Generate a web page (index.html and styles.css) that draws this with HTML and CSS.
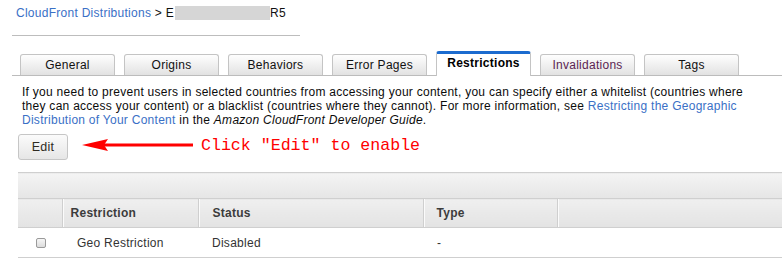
FILE: index.html
```html
<!DOCTYPE html>
<html>
<head>
<meta charset="utf-8">
<link rel="stylesheet" href="styles.css">
</head>
<body>
<div class="page">
  <div class="crumb"><a class="link">CloudFront Distributions</a> &gt; E<span class="blur"></span>R5</div>
  <div class="rule"></div>
  <div class="tabs">
    <div class="tab">General</div>
    <div class="tab">Origins</div>
    <div class="tab">Behaviors</div>
    <div class="tab">Error Pages</div>
    <div class="tab active">Restrictions</div>
    <div class="tab visited">Invalidations</div>
    <div class="tab">Tags</div>
  </div>
  <p class="intro">If you need to prevent users in selected countries from accessing your content, you can specify either a whitelist (countries where they can access your content) or a blacklist (countries where they cannot). For more information, see <a class="link">Restricting the Geographic Distribution of Your Content</a> in the <em>Amazon CloudFront Developer Guide</em>.</p>
  <div class="actions">
    <button class="btn">Edit</button>
    <svg class="arrow" width="112" height="14" viewBox="0 0 112 14">
      <line x1="20" y1="7" x2="111" y2="7" stroke="#ff0000" stroke-width="3"/>
      <polygon points="0,7 26,1 22,7 26,13" fill="#ff0000"/>
    </svg>
    <span class="note">Click "Edit" to enable</span>
  </div>
  <table class="grid">
    <colgroup>
      <col class="c1"><col class="c2"><col class="c3"><col class="c4"><col>
    </colgroup>
    <thead>
      <tr class="band"><th colspan="5"></th></tr>
      <tr class="heads">
        <th></th>
        <th class="p-restr">Restriction</th>
        <th class="p-status">Status</th>
        <th class="p-type">Type</th>
        <th></th>
      </tr>
    </thead>
    <tbody>
      <tr class="row">
        <td class="chk"><span class="box"></span></td>
        <td class="p-geo">Geo Restriction</td>
        <td class="p-dis">Disabled</td>
        <td class="p-type">-</td>
        <td></td>
      </tr>
    </tbody>
  </table>
</div>
</body>
</html>
```
FILE: styles.css
```css
html, body {
  margin: 0;
  padding: 0;
  background: #fff;
  overflow: hidden;
}
body {
  font-family: "Liberation Sans", Arial, sans-serif;
  font-size: 12px;
  letter-spacing: 0.27px;
  color: #111;
}
.page {
  display: flex;
  flex-direction: column;
}
.link {
  color: #3a70c6;
  text-decoration: none;
}
.crumb {
  padding: 6px 0 0 16px;
  line-height: 14px;
  color: #111;
}
.blur {
  display: inline-block;
  width: 95px;
  height: 14px;
  margin-left: 1px;
  vertical-align: -3px;
  background: #d6d6d6;
}
.rule {
  margin: 15px 0 0 12px;
  width: 288px;
  height: 1px;
  background: #bdbdbd;
}
.tabs {
  display: flex;
  align-items: flex-end;
  gap: 9px;
  margin: 15px 0 0 12px;
  padding-left: 8px;
  border-bottom: 1px solid #bcbcbc;
  height: 24px;
}
.tab {
  box-sizing: border-box;
  width: 95px;
  height: 21px;
  border: 1px solid #c4c4c4;
  border-bottom: none;
  border-radius: 3px 3px 0 0;
  background: linear-gradient(#fefefe, #e2e2e2);
  text-align: center;
  line-height: 20px;
  color: #111;
}
.tab.visited {
  color: #5c1f52;
}
.tab.active {
  height: 25px;
  margin-bottom: -1px;
  border-top: 3px solid #1b6bcf;
  background: #fff;
  font-weight: bold;
  color: #000;
  line-height: 18px;
}
.intro {
  margin: 9px 0 0 22px;
  width: 738px;
  line-height: 14px;
  color: #0c0c0c;
}
.actions {
  display: flex;
  align-items: center;
  margin: 7px 0 0 18px;
}
.btn {
  box-sizing: border-box;
  width: 50px;
  height: 26px;
  padding: 0;
  border: 1px solid #c6c6c6;
  border-radius: 3px;
  background: linear-gradient(#fbfbfb, #e6e6e6);
  font-family: "Liberation Sans", Arial, sans-serif;
  font-size: 12.5px;
  letter-spacing: 0.2px;
  color: #2e2a22;
}
.arrow {
  margin: -4px 0 0 14px;
}
.note {
  margin: -4px 0 0 7px;
  font-family: "Liberation Mono", "Courier New", monospace;
  font-size: 16.6px;
  letter-spacing: 0;
  color: #ff0000;
}
.grid {
  margin: 12px 0 0 18px;
  width: 764px;
  border-collapse: collapse;
  table-layout: fixed;
}
.c1 { width: 44px; }
.c2 { width: 136px; }
.c3 { width: 225px; }
.c4 { width: 134px; }
.band th {
  height: 25px;
  padding: 0;
  border-top: 1px solid #cfcfcf;
  background: linear-gradient(#f4f4f4, #e5e5e5);
}
.heads th {
  height: 28px;
  padding: 0;
  text-align: left;
  font-weight: bold;
  color: #3c3c3c;
  border-top: 1px solid #cfcfcf;
  border-bottom: 1px solid #cfcfcf;
  background: linear-gradient(#efefef, #e3e3e3);
}
.heads th + th {
  border-left: 1px solid #cfcfcf;
  box-shadow: inset 1px 0 0 #fbfbfb;
}
.heads .p-restr { padding-left: 8px; }
.heads .p-status { padding-left: 14px; }
.heads .p-type { padding-left: 13px; }
.row td {
  height: 29px;
  padding: 0;
  color: #333;
  border-bottom: 1px solid #cfcfcf;
}
.row .chk { padding-left: 18px; }
.row .p-geo { padding-left: 15px; }
.row .p-dis { padding-left: 14px; }
.row .p-type { padding-left: 14px; }
.box {
  display: block;
  box-sizing: border-box;
  width: 10px;
  height: 10px;
  border: 1px solid #9a9a9a;
  border-radius: 2px;
  background: linear-gradient(#f6f6f6, #dcdcdc);
}
```
